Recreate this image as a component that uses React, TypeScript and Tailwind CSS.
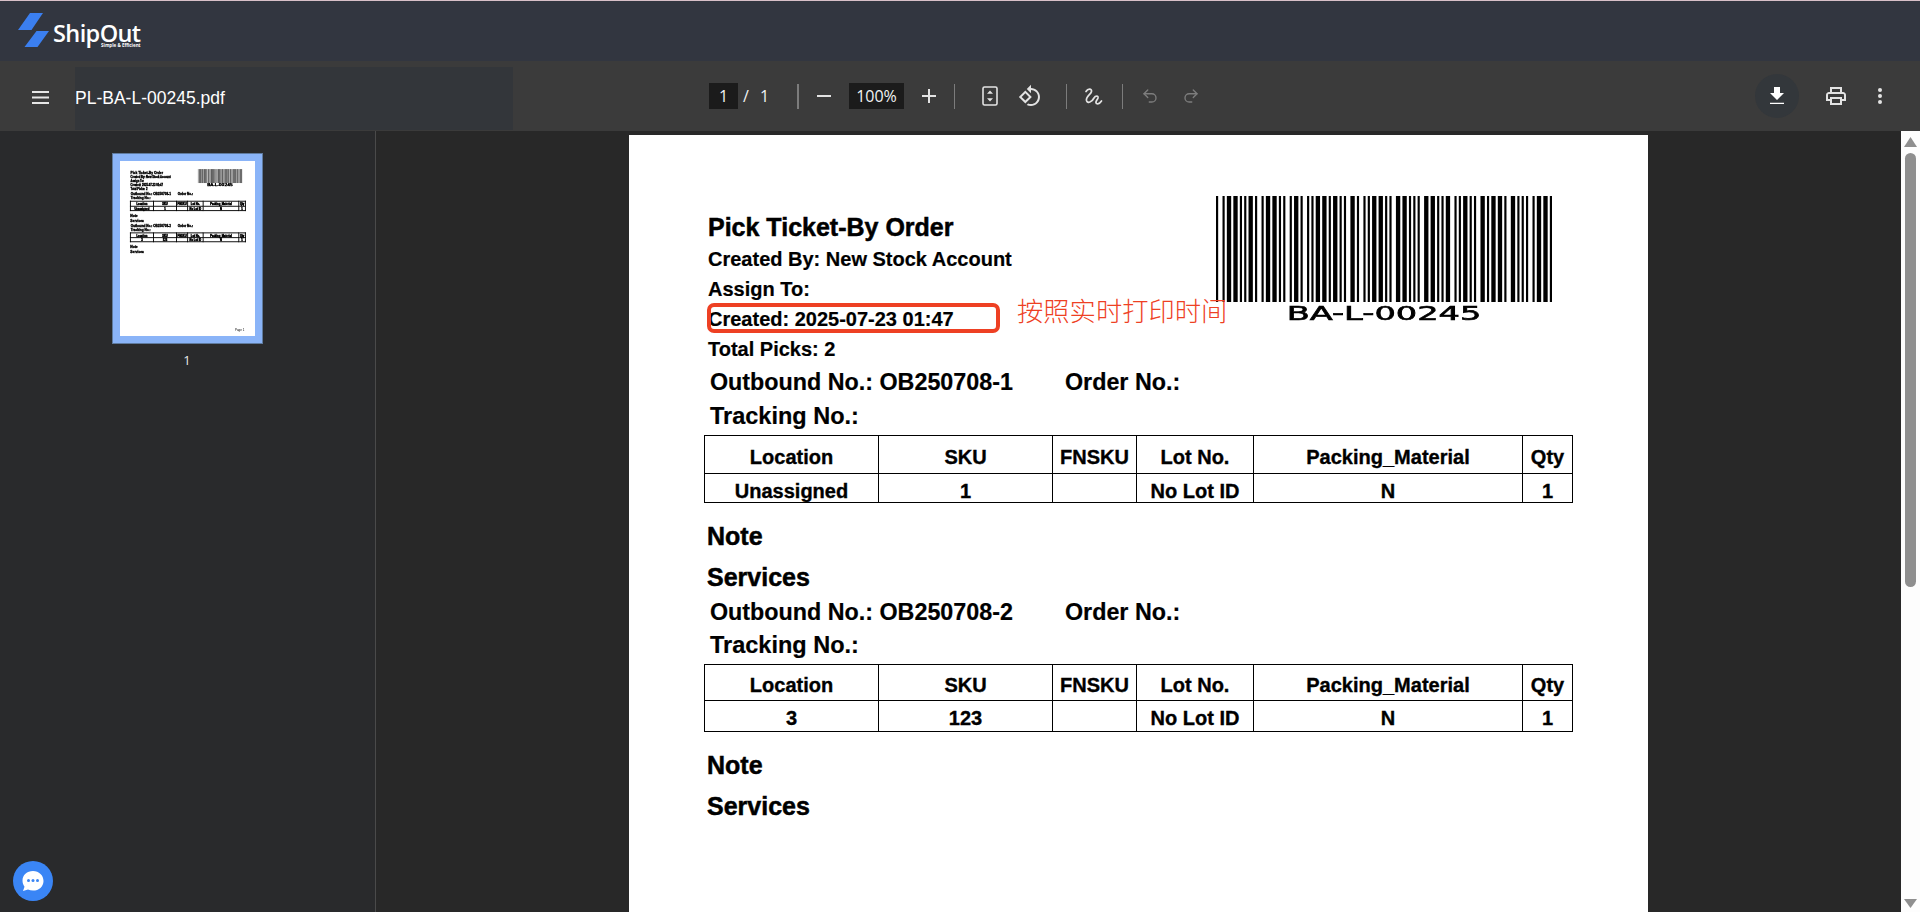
import { Redo2, Undo2 } from 'lucide-react';

const CODE39: Record<string, string> = {
  '*': 'nwnnwnwnn',
  B: 'nnwnnwnnw',
  A: 'wnnnnwnnw',
  '-': 'nwnnnnwnw',
  L: 'nnwnnnnww',
  '0': 'nnnwwnwnn',
  '2': 'nnwwnnnnw',
  '4': 'nnnwwnnnw',
  '5': 'wnnwwnnnn',
};

function barcodeBars(value: string) {
  const bars: { x: number; w: number }[] = [];
  let x = 0;
  `*${value}*`.split('').forEach((ch) => {
    CODE39[ch].split('').forEach((kind, i) => {
      const w = kind === 'w' ? 2 : 1;
      if (i % 2 === 0) bars.push({ x, w });
      x += w;
    });
    x += 1;
  });
  return { bars, total: x - 1 };
}

function Barcode() {
  const { bars, total } = barcodeBars('BA-L-00245');
  return (
    <svg width="336" height="106" viewBox={`0 0 ${total} 1`} preserveAspectRatio="none" className="block">
      {bars.map((b) => (
        <rect key={b.x} x={b.x} y="0" width={b.w} height="1" fill="#000" />
      ))}
    </svg>
  );
}

const columns = [
  { name: 'Location', width: 'w-[174px]' },
  { name: 'SKU', width: 'w-[174px]' },
  { name: 'FNSKU', width: 'w-[84px]' },
  { name: 'Lot No.', width: 'w-[117px]' },
  { name: 'Packing_Material', width: 'w-[269px]' },
  { name: 'Qty', width: 'w-[50px]' },
];

type TableProps = { row: string[]; thumb?: boolean; second?: boolean };

function PickTable({ row, thumb, second }: TableProps) {
  const border = thumb ? 'border-[7px] border-black' : 'border border-black';
  return (
    <table className="ml-[-4px] w-[868px] table-fixed border-collapse text-center text-[20px] font-bold leading-[20px] text-black [-webkit-text-stroke:0.35px_black]">
      <thead>
        <tr className={second ? 'h-[36px]' : 'h-[38px]'}>
          {columns.map((c) => (
            <th key={c.name} className={`${c.width} ${border} p-0 font-bold ${second ? 'pt-[4px]' : 'pt-[6px]'}`}>
              {c.name}
            </th>
          ))}
        </tr>
      </thead>
      <tbody>
        <tr className={second ? 'h-[31px]' : 'h-[29px]'}>
          {row.map((cell, i) => (
            <td key={i} className={`${border} p-0 ${second ? 'pt-[3px]' : 'pt-[6px]'}`}>
              {cell}
            </td>
          ))}
        </tr>
      </tbody>
    </table>
  );
}

function OutboundBlock({ no, ...table }: TableProps & { no: string }) {
  return (
    <div>
      <div className="flex h-[33.5px] items-center pl-[2px] text-[23.3px] leading-[33px] [-webkit-text-stroke:0.2px_black]">
        <span className="w-[355px]">Outbound No.: {no}</span>
        <span>Order No.:</span>
      </div>
      <div className="h-[33px] pl-[2px] text-[23.5px] leading-[33px] [-webkit-text-stroke:0.2px_black]">Tracking No.:</div>
      <div className="mt-[2px]">
        <PickTable {...table} />
      </div>
      <div className="ml-[-1px] mt-[13px] h-[41px] text-[25px] leading-[40px] [-webkit-text-stroke:0.5px_black]">Note</div>
      <div className="ml-[-1px] h-[39px] text-[25px] leading-[40px] [-webkit-text-stroke:0.5px_black]">Services</div>
    </div>
  );
}

function PdfPage({ thumb }: { thumb?: boolean }) {
  return (
    <div
      className={`relative flex h-[1320px] w-[1019px] flex-col bg-white pl-[79px] pt-[61px] font-['Liberation_Sans','Noto_Sans_CJK_SC',sans-serif] font-bold text-black ${
        thumb ? '[&_div]:[-webkit-text-stroke:2.5px_black]! [&_table]:[-webkit-text-stroke:3px_black]!' : ''
      }`}
    >
      <div className="flex">
        <div className="w-[508px] shrink-0 pt-[14px] text-[20px] leading-[30px] [-webkit-text-stroke:0.2px_black]">
          <div className="h-[34px] text-[25px] leading-[34px] [-webkit-text-stroke:0.5px_black]">Pick Ticket-By Order</div>
          <div>Created By: New Stock Account</div>
          <div>Assign To:</div>
          <div>Created: 2025-07-23 01:47</div>
          <div>Total Picks: 2</div>
        </div>
        <div className="flex flex-col items-center">
          <Barcode />
          <div className="mt-[1px] scale-x-[1.77] font-['DejaVu_Sans',sans-serif] text-[19px] font-normal leading-[20px] [-webkit-text-stroke:0.6px_black]">
            BA-L-00245
          </div>
        </div>
      </div>
      <div className="mt-[2px]">
        <OutboundBlock no="OB250708-1" row={['Unassigned', '1', '', 'No Lot ID', 'N', '1']} thumb={thumb} />
      </div>
      <OutboundBlock no="OB250708-2" row={['3', '123', '', 'No Lot ID', 'N', '1']} thumb={thumb} second />

      {thumb ? (
        <span className="mt-auto mb-[30px] ml-[789px] text-[22px] font-normal">Page 1</span>
      ) : (
        <>
          <div className="absolute left-[78px] top-[168px] h-[30px] w-[293px] rounded-[7px] border-[4px] border-[#ee4023]" />
          <div className="absolute left-[388px] top-[158px] whitespace-nowrap font-['Noto_Sans_CJK_SC',sans-serif] text-[26.3px] font-light leading-[34px] text-[#ee4023]">
            按照实时打印时间
          </div>
        </>
      )}
    </div>
  );
}

function Divider({ className }: { className: string }) {
  return <div className={`h-[25px] shrink-0 ${className}`} />;
}

function Toolbar() {
  return (
    <div className="flex h-[70px] shrink-0 items-center bg-[#3b3b3b] text-[#f1f3f4]">
      <div className="flex w-[709px] shrink-0 items-center self-stretch">
        <svg width="17" height="13" viewBox="0 0 17 13" className="ml-[32px] mt-[2px] shrink-0" fill="#e6e6e6">
          <rect x="0" y="0" width="17" height="2" />
          <rect x="0" y="5.5" width="17" height="2" />
          <rect x="0" y="11" width="17" height="2" />
        </svg>
        <div className="ml-[26px] mt-[6px] flex h-[63px] w-[438px] items-center self-start bg-[#33363a] pb-[1px] font-['Liberation_Sans',sans-serif] text-[17.5px] text-white">
          PL-BA-L-00245.pdf
        </div>
      </div>

      <div className="flex items-center font-['Open_Sans',sans-serif] text-[16px]">
        <div className="flex h-[26px] w-[29px] items-center justify-center bg-[#1b1b1b]">1</div>
        <span className="ml-[5px] w-[17px]">/</span>
        <span className="w-[10px]">1</span>
        <Divider className="ml-[27px] w-[2px] bg-[#7c7c7c]" />
        <svg width="14" height="2" className="ml-[18px]" fill="#e3e3e3">
          <rect width="14" height="2" />
        </svg>
        <div className="ml-[18px] flex h-[26px] w-[55px] items-center justify-center bg-[#1b1b1b]">100%</div>
        <svg width="14" height="14" className="ml-[18px]" fill="#e3e3e3">
          <rect y="6" width="14" height="2" />
          <rect x="6" width="2" height="14" />
        </svg>
        <Divider className="ml-[18px] w-px bg-[#7c7c7c]" />
        <svg width="16" height="20" viewBox="0 0 16 20" fill="none" className="ml-[27px]">
          <rect x="1" y="1" width="14" height="18" rx="1.5" stroke="#e3e3e3" strokeWidth="1.6" />
          <path d="M8 4.5l3 3.2H5zM8 15.5l3-3.2H5z" fill="#e3e3e3" />
        </svg>
        <svg width="24" height="24" viewBox="0 0 24 24" fill="#e3e3e3" className="ml-[20px]">
          <path d="M7.34 6.41L.86 12.9l6.49 6.48 6.49-6.48-6.5-6.49zM3.69 12.9l3.66-3.66L11 12.9l-3.66 3.66-3.65-3.66zm15.67-6.26C17.61 4.88 15.3 4 13 4V.76L8.76 5 13 9.24V6c1.79 0 3.58.68 4.95 2.05 2.73 2.73 2.73 7.17 0 9.9C16.58 19.32 14.79 20 13 20c-.97 0-1.94-.21-2.84-.61l-1.49 1.49C10.02 21.62 11.51 22 13 22c2.3 0 4.61-.88 6.36-2.64 3.52-3.51 3.52-9.21 0-12.72z" />
        </svg>
        <Divider className="ml-[24px] w-px bg-[#7c7c7c]" />
        <svg width="20" height="19" viewBox="0 0 20 19" fill="none" stroke="#e3e3e3" strokeWidth="1.7" strokeLinecap="round" className="ml-[16px]">
          <path d="M3 4.5C5 1 9 1.5 8.5 4.5 8 7.5 2.5 9.5 3.5 13.5 4.5 17 9 15 11 11 12.5 8.5 15.5 8.5 15 11 14.5 13 11.500 15 13.5 16.5 15.5 17.5 17.5 15.5 18.5 14" />
        </svg>
        <Divider className="ml-[19px] w-px bg-[#7c7c7c]" />
        <Undo2 size={18} strokeWidth={1.8} color="#7d7d7d" className="ml-[18px]" />
        <Redo2 size={18} strokeWidth={1.8} color="#7d7d7d" className="ml-[23px]" />
      </div>

      <div className="ml-auto flex items-center">
        <div className="flex h-[44px] w-[44px] items-center justify-center rounded-full bg-[#33373b]">
          <svg width="24" height="24" viewBox="0 0 24 24" fill="#fff">
            <path d="M5 20h14v-1.2H5zM19 9h-4V3H9v6H5l7 7 7-7z" />
          </svg>
        </div>
        <svg width="24" height="24" viewBox="0 0 24 24" fill="#e3e3e3" className="ml-[25px]">
          <path d="M19 8h-1V3H6v5H5c-1.66 0-3 1.34-3 3v6h4v4h12v-4h4v-6c0-1.66-1.34-3-3-3zM8 5h8v3H8V5zm8 12v2H8v-4h8v2zm2-2v-2H6v2H4v-4c0-.55.45-1 1-1h14c.55 0 1 .45 1 1v4h-2z" />
        </svg>
        <svg width="4" height="16" viewBox="0 0 4 16" fill="#e3e3e3" className="ml-[30px] mr-[38px]">
          <circle cx="2" cy="2" r="2" />
          <circle cx="2" cy="8" r="2" />
          <circle cx="2" cy="14" r="2" />
        </svg>
      </div>
    </div>
  );
}

function Logo() {
  return (
    <div className="ml-[18px] flex items-start">
      <svg width="32" height="35" viewBox="0 0 32 35" fill="#3b7ff0" className="mt-[-1px]">
        <path d="M12 0h13L13.5 17H0zM18.5 18H31L19.5 34H6.5z" />
      </svg>
      <div className="ml-[3px] flex flex-col items-end font-['Open_Sans',sans-serif] text-white">
        <span className="mt-[9px] text-[23.5px] font-semibold leading-[20px] tracking-[-0.6px]">ShipOut</span>
        <span className="text-[4.5px] font-bold leading-[5px]">Simple &amp; Efficient</span>
      </div>
    </div>
  );
}

function Scrollbar() {
  return (
    <div className="flex w-[19px] shrink-0 flex-col items-center bg-[#fdfdfd]">
      <svg width="13" height="10" className="mt-[6px] shrink-0" fill="#8f8f8f">
        <path d="M6.5 0L13 10H0z" />
      </svg>
      <div className="mt-[6px] h-[434px] w-[11px] rounded-full bg-[#8f8f8f]" />
      <svg width="13" height="9" className="mt-auto mb-[4px] shrink-0" fill="#8f8f8f">
        <path d="M0 0h13L6.5 9z" />
      </svg>
    </div>
  );
}

export default function App() {
  return (
    <div className="relative flex h-[912px] w-[1920px] flex-col overflow-hidden bg-[#282828] font-['Liberation_Sans',sans-serif]">
      <div className="flex h-[61px] shrink-0 items-center border-t border-[#d8c0c8] bg-[#323640]">
        <Logo />
      </div>
      <Toolbar />
      <div className="flex min-h-0 flex-1">
        <div className="flex w-[376px] shrink-0 flex-col items-center border-r border-[#4a4a4a] bg-[#292a2c]">
          <div className="mt-[22px] ml-[-1px] border border-[#5f7b9f] bg-[#8ab4f8] p-[7px]">
            <div className="h-[175px] w-[135px] overflow-hidden bg-white">
              <div className="origin-top-left scale-[0.1325] blur-[3px]">
                <PdfPage thumb />
              </div>
            </div>
          </div>
          <div className="mt-[7px] ml-[-1px] font-['Open_Sans',sans-serif] text-[13px] text-[#e8eaed]">1</div>
        </div>
        <div className="ml-[253px] mt-[4px]">
          <PdfPage />
        </div>
        <div className="ml-auto flex">
          <Scrollbar />
        </div>
      </div>

      <div className="absolute bottom-[11px] left-[13px] flex h-[40px] w-[40px] items-center justify-center rounded-full bg-[#3a85f5]">
        <svg width="24" height="22" viewBox="0 0 24 22" fill="#fff">
          <path d="M12 1C6 1 1.5 5 1.5 10.5c0 2.4.7 4.5 2 6.2L2 21l5-1.4c1.5.7 3.2 1 5 1 6 0 10.5-4 10.5-9.6S18 1 12 1z" />
          <circle cx="7.5" cy="10.5" r="1.5" fill="#3a85f5" />
          <circle cx="12" cy="10.5" r="1.5" fill="#3a85f5" />
          <circle cx="16.5" cy="10.5" r="1.5" fill="#3a85f5" />
        </svg>
      </div>
    </div>
  );
}
